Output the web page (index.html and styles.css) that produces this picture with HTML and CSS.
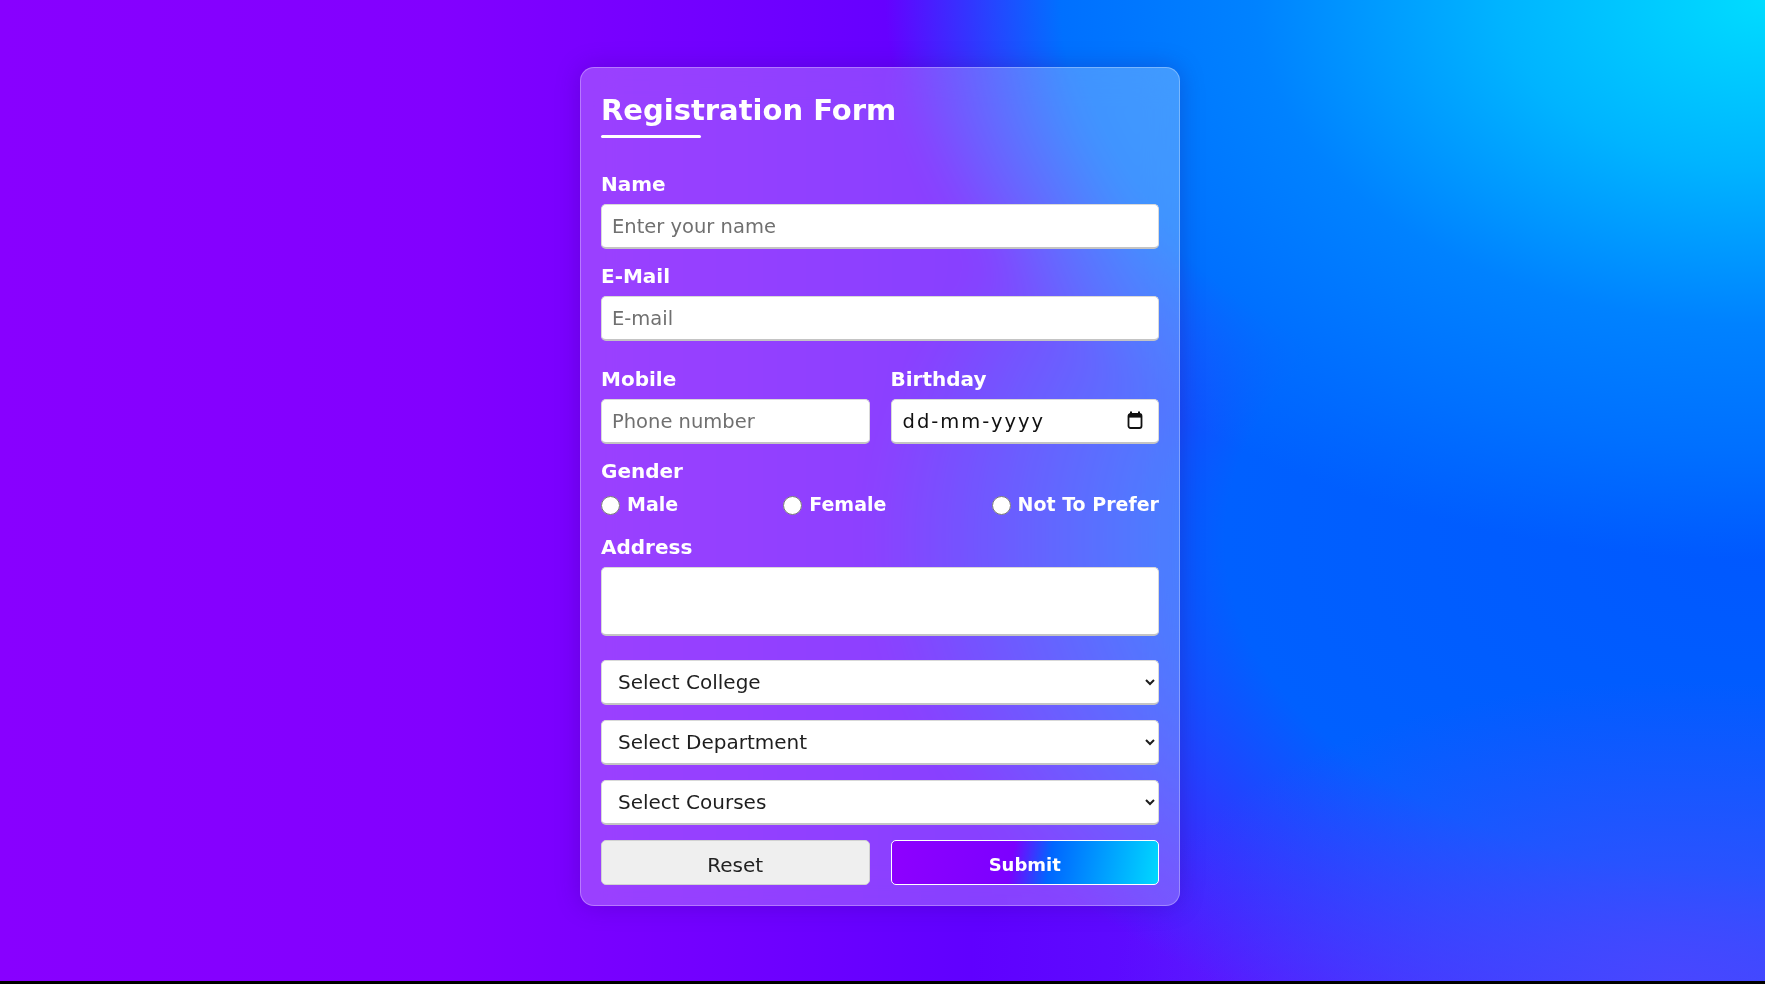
FILE: index.html
```html
<!DOCTYPE html>
<html lang="en">
<head>
<meta charset="utf-8">
<title>Registration Form</title>
<link rel="stylesheet" href="styles.css">
</head>
<body>
<main class="page">
  <section class="card">
    <h1 class="title">Registration Form</h1>
    <form class="form">
      <div class="field">
        <label class="label" for="name">Name</label>
        <input class="input" id="name" type="text" placeholder="Enter your name">
      </div>
      <div class="field">
        <label class="label" for="email">E-Mail</label>
        <input class="input" id="email" type="text" placeholder="E-mail">
      </div>
      <div class="row">
        <div class="field">
          <label class="label" for="mobile">Mobile</label>
          <input class="input" id="mobile" type="text" placeholder="Phone number">
        </div>
        <div class="field">
          <span class="label">Birthday</span>
          <div class="input date">
            <span>dd-mm-yyyy</span>
            <svg class="cal" width="16" height="18" viewBox="0 0 16 18" aria-hidden="true">
              <rect x="3" y="0.5" width="2" height="3" fill="#111"/>
              <rect x="11" y="0.5" width="2" height="3" fill="#111"/>
              <rect x="1.5" y="3" width="13" height="14" rx="2" fill="none" stroke="#111" stroke-width="1.8"/>
              <rect x="1.5" y="3" width="13" height="3.6" fill="#111"/>
            </svg>
          </div>
        </div>
      </div>
      <div class="field">
        <span class="label">Gender</span>
        <div class="radios">
          <label class="radio"><input type="radio" name="gender"><span>Male</span></label>
          <label class="radio"><input type="radio" name="gender"><span>Female</span></label>
          <label class="radio"><input type="radio" name="gender"><span>Not To Prefer</span></label>
        </div>
      </div>
      <div class="field field-address">
        <label class="label" for="address">Address</label>
        <textarea class="input textarea" id="address"></textarea>
      </div>
      <div class="selects">
        <select class="input select"><option>Select College</option></select>
        <select class="input select"><option>Select Department</option></select>
        <select class="input select"><option>Select Courses</option></select>
        <div class="buttons">
          <button type="reset" class="btn btn-reset">Reset</button>
          <button type="submit" class="btn btn-submit">Submit</button>
        </div>
      </div>
    </form>
  </section>
</main>
</body>
</html>
```
FILE: styles.css
```css
* {
  box-sizing: border-box;
}

html {
  height: 100%;
  background: #000;
}

body {
  margin: 0;
  height: calc(100% - 3px);
  font-family: "DejaVu Sans", "Liberation Sans", sans-serif;
  background:
    radial-gradient(ellipse 880px 560px at 100% 0%, #00dcff 0%, #00b4ff 30%, #0082ff 58%, #0070ff 80%, rgba(0, 100, 255, 0) 100%),
    radial-gradient(ellipse 560px 300px at 95% 100%, rgba(78, 70, 255, 0.85) 0%, rgba(78, 70, 255, 0) 100%),
    radial-gradient(ellipse 900px 560px at 100% 55%, #0058ff 0%, #0060ff 60%, rgba(0, 96, 255, 0) 100%),
    linear-gradient(90deg, #8800ff 0%, #8200ff 25%, #7000ff 42%, #6000ff 55%, #5818ff 75%, #5038ff 100%);
  overflow: hidden;
}

.page {
  height: 100%;
  display: flex;
  justify-content: center;
  align-items: center;
  padding: 0 5px 8px 0;
}

.card {
  width: 600px;
  padding: 20px;
  border: 1px solid rgba(255, 255, 255, 0.3);
  border-radius: 14px;
  background: rgba(255, 255, 255, 0.25);
  backdrop-filter: blur(18px);
  box-shadow: 0 0 24px rgba(40, 0, 120, 0.25);
  color: #fff;
}

.title {
  margin: 0;
  font-size: 29px;
  line-height: 44px;
  font-weight: 700;
}

.title::after {
  content: "";
  display: block;
  width: 100px;
  height: 3px;
  margin-top: 3px;
  border-radius: 2px;
  background: #fff;
}

.form {
  display: flex;
  flex-direction: column;
  gap: 14px;
  margin-top: 33px;
}

.field {
  display: flex;
  flex-direction: column;
  gap: 7px;
  min-width: 0;
}

.label {
  font-size: 20px;
  line-height: 26px;
  font-weight: 700;
}

.input {
  width: 100%;
  height: 45px;
  margin: 0;
  padding: 0 10px;
  border: 1px solid #d9d9d9;
  border-bottom: 2px solid #c4c4c4;
  border-radius: 5px;
  background: #fff;
  font-family: inherit;
  font-size: 19.5px;
  color: #222;
  outline: none;
}

.input::placeholder {
  color: #707070;
}

.row {
  display: grid;
  grid-template-columns: 1fr 1fr;
  gap: 21px;
  margin-top: 11px;
}

.date {
  display: flex;
  align-items: center;
  justify-content: space-between;
  padding: 0 15px 0 11px;
  font-size: 19.5px;
  color: #111;
  letter-spacing: 2px;
}

.cal {
  display: block;
  margin-top: -2px;
}

.radios {
  display: flex;
  justify-content: space-between;
  height: 26px;
  align-items: center;
}

.radio {
  display: flex;
  align-items: center;
  gap: 7px;
  font-size: 19px;
  font-weight: 700;
  line-height: 26px;
}

.radio input {
  width: 19px;
  height: 19px;
  margin: 2px 0 0 0;
}

.field-address {
  margin-top: 3px;
}

.textarea {
  height: 69px;
  resize: none;
  padding: 8px 10px;
}

.selects {
  display: flex;
  flex-direction: column;
  gap: 15px;
  margin-top: 10px;
}

.select {
  padding: 0 10px 0 12px;
  font-size: 20px;
  color: #1e1e1e;
}

.buttons {
  display: grid;
  grid-template-columns: 1fr 1fr;
  gap: 21px;
}

.btn {
  height: 45px;
  border-radius: 5px;
  font-family: inherit;
  padding: 4px 0 0;
}

.btn-reset {
  background: #efefef;
  border: 1px solid #d2d2d2;
  color: #222;
  font-size: 20px;
}

.btn-submit {
  background: linear-gradient(100deg, #8e00ff 0%, #7c00ff 45%, #0066ff 59%, #00d8ff 100%);
  border: 1px solid #fff;
  color: #fff;
  font-size: 18px;
  font-weight: 700;
}
```
